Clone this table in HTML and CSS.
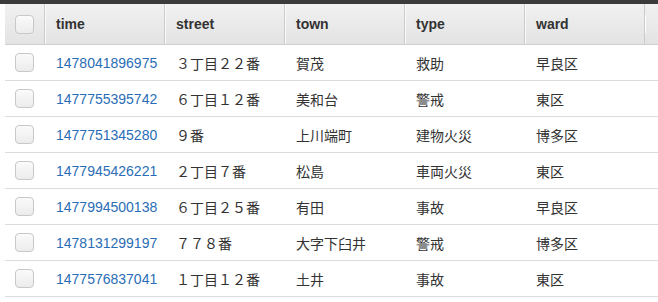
FILE: index.html
```html
<!DOCTYPE html>
<html>
<head>
<meta charset="utf-8">
<link rel="stylesheet" href="styles.css">
</head>
<body>
<div class="topbar"></div>
<div class="table">
  <div class="row head">
    <div class="cell chk"><span class="box"></span></div>
    <div class="cell">time</div>
    <div class="cell">street</div>
    <div class="cell">town</div>
    <div class="cell">type</div>
    <div class="cell">ward</div>
    <div class="cell last"><span class="grip"></span></div>
  </div>
  <div class="row">
    <div class="cell chk"><span class="box"></span></div>
    <div class="cell"><a class="link">1478041896975</a></div>
    <div class="cell">３丁目２２番</div>
    <div class="cell">賀茂</div>
    <div class="cell">救助</div>
    <div class="cell">早良区</div>
    <div class="cell"></div>
  </div>
  <div class="row">
    <div class="cell chk"><span class="box"></span></div>
    <div class="cell"><a class="link">1477755395742</a></div>
    <div class="cell">６丁目１２番</div>
    <div class="cell">美和台</div>
    <div class="cell">警戒</div>
    <div class="cell">東区</div>
    <div class="cell"></div>
  </div>
  <div class="row">
    <div class="cell chk"><span class="box"></span></div>
    <div class="cell"><a class="link">1477751345280</a></div>
    <div class="cell">９番</div>
    <div class="cell">上川端町</div>
    <div class="cell">建物火災</div>
    <div class="cell">博多区</div>
    <div class="cell"></div>
  </div>
  <div class="row">
    <div class="cell chk"><span class="box"></span></div>
    <div class="cell"><a class="link">1477945426221</a></div>
    <div class="cell">２丁目７番</div>
    <div class="cell">松島</div>
    <div class="cell">車両火災</div>
    <div class="cell">東区</div>
    <div class="cell"></div>
  </div>
  <div class="row">
    <div class="cell chk"><span class="box"></span></div>
    <div class="cell"><a class="link">1477994500138</a></div>
    <div class="cell">６丁目２５番</div>
    <div class="cell">有田</div>
    <div class="cell">事故</div>
    <div class="cell">早良区</div>
    <div class="cell"></div>
  </div>
  <div class="row">
    <div class="cell chk"><span class="box"></span></div>
    <div class="cell"><a class="link">1478131299197</a></div>
    <div class="cell">７７８番</div>
    <div class="cell">大字下臼井</div>
    <div class="cell">警戒</div>
    <div class="cell">博多区</div>
    <div class="cell"></div>
  </div>
  <div class="row">
    <div class="cell chk"><span class="box"></span></div>
    <div class="cell"><a class="link">1477576837041</a></div>
    <div class="cell">１丁目１２番</div>
    <div class="cell">土井</div>
    <div class="cell">事故</div>
    <div class="cell">東区</div>
    <div class="cell"></div>
  </div>
</div>
</body>
</html>
```

FILE: styles.css
```css
html, body {
  margin: 0;
  padding: 0;
  background: #fff;
}
body {
  font-family: "Liberation Sans", Arial, "Noto Sans CJK JP", sans-serif;
  font-size: 14px;
  color: #333;
}
.topbar {
  height: 4px;
  background: #3b3b3b;
}
.table {
  margin-left: 5px;
}
.row {
  display: grid;
  grid-template-columns: 40px 120px 120px 120px 120px 120px 1fr;
  height: 36px;
  border-bottom: 1px solid #dcdcdc;
  box-sizing: border-box;
}
.row .cell {
  display: flex;
  align-items: center;
  padding-left: 11px;
  white-space: nowrap;
  overflow: hidden;
}
.row .cell.chk {
  padding-left: 10px;
}
.head {
  height: 41px;
  background: linear-gradient(#f1f1f1, #e3e3e3);
  border-bottom: 1px solid #cfcfcf;
  font-weight: bold;
  color: #333;
}
.head .cell {
  border-right: 1px solid #cbcbcb;
  border-left: 1px solid #fafafa;
  padding-left: 10px;
}
.head .cell.chk {
  border-left: none;
  padding-left: 10px;
}
.head .cell.last {
  border-right: none;
  padding-left: 0;
  border-left: none;
}
.grip {
  display: block;
  width: 1px;
  height: 18px;
  background: #fff;
}
.box {
  display: block;
  width: 17px;
  height: 17px;
  border: 1px solid #c8c8c8;
  border-radius: 4px;
  background: linear-gradient(#fafafa, #ececec);
}
.link {
  color: #2a6db6;
  text-decoration: none;
}
```
